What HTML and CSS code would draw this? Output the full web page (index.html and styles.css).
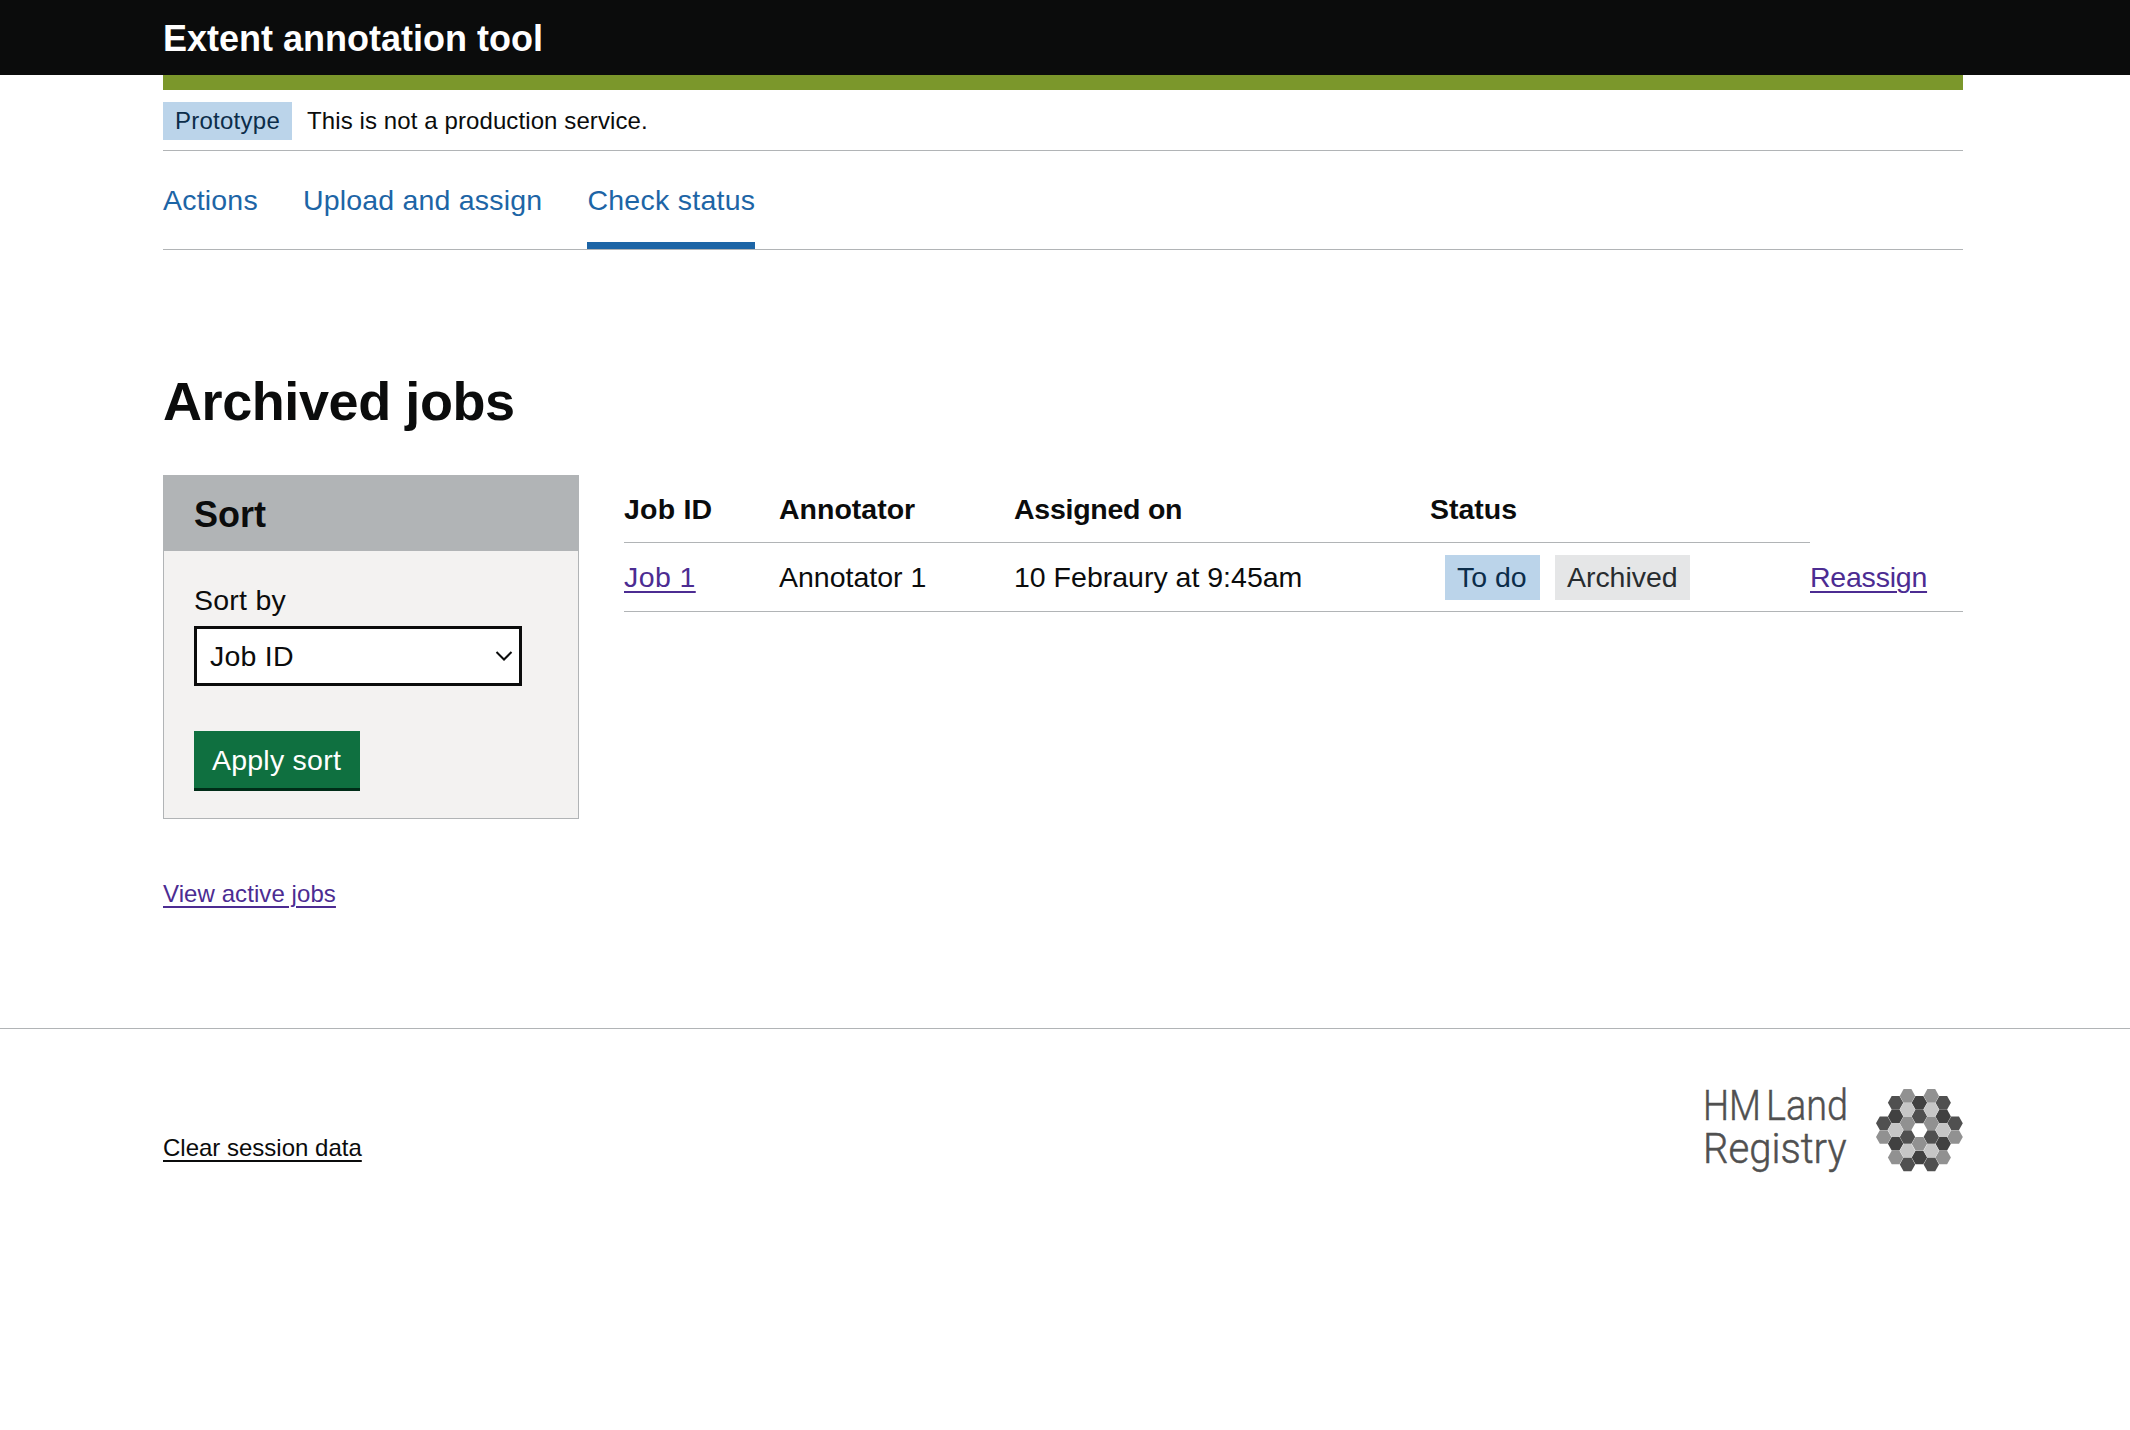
FILE: index.html
```html
<!DOCTYPE html>
<html lang="en">
<head>
<meta charset="utf-8">
<title>Archived jobs - Extent annotation tool</title>
<link rel="stylesheet" href="styles.css">
</head>
<body>
<header class="header"><div class="container"><span class="header-title">Extent annotation tool</span></div></header>
<div class="container">
  <div class="brand-bar"></div>
  <div class="phase-banner"><strong class="tag tag-phase">Prototype</strong><span class="phase-text">This is not a production service.</span></div>
  <nav class="nav">
    <a class="nav-link" href="#">Actions</a>
    <a class="nav-link" href="#">Upload and assign</a>
    <a class="nav-link current" href="#">Check status</a>
  </nav>
  <main>
    <h1 class="heading">Archived jobs</h1>
    <div class="columns">
      <form class="sort-panel">
        <h2 class="sort-title">Sort</h2>
        <div class="sort-body">
          <label class="label" for="sort">Sort by</label>
          <div class="select-wrap">
            <select class="select" id="sort"><option>Job ID</option></select>
            <svg class="chevron" viewBox="0 0 18 12" width="18" height="12"><path d="M1.500 2 9 9.500 16.500 2"/></svg>
          </div>
          <button class="button" type="button">Apply sort</button>
        </div>
      </form>
      <table class="jobs">
        <colgroup><col class="col-id"><col class="col-annotator"><col class="col-assigned"><col class="col-status"><col></colgroup>
        <thead><tr><th class="th-id">Job ID</th><th>Annotator</th><th class="th-assigned">Assigned on</th><th>Status</th></tr></thead>
        <tbody><tr>
          <td><a class="link link-job" href="#">Job 1</a></td>
          <td>Annotator 1</td>
          <td>10 Febraury at 9:45am</td>
          <td><div class="tags"><strong class="tag tag-blue">To do</strong><strong class="tag tag-grey">Archived</strong></div></td>
          <td><a class="link link-reassign" href="#">Reassign</a></td>
        </tr></tbody>
      </table>
    </div>
    <p class="view-active"><a class="link" href="#">View active jobs</a></p>
  </main>
</div>
<footer class="footer">
  <div class="container footer-inner">
    <a class="footer-link" href="#">Clear session data</a>
    <svg class="logo" viewBox="0 0 260 86" width="260" height="86" role="img" aria-label="HM Land Registry">
      <defs><path id="hex" d="M-7.700 0-3.900-6.800H3.900L7.700 0 3.900 6.800H-3.900Z"/></defs>
      <g class="logo-text">
        <text x="0" y="31" textLength="58" lengthAdjust="spacingAndGlyphs">HM</text>
        <text x="63" y="31" textLength="82" lengthAdjust="spacingAndGlyphs">Land</text>
        <text x="0" y="74" textLength="143.500" lengthAdjust="spacingAndGlyphs">Registry</text>
      </g>
      <g class="hex-a"><use href="#hex" x="180.700" y="34.300"/><use href="#hex" x="192.600" y="13.700"/><use href="#hex" x="204.500" y="48"/><use href="#hex" x="204.500" y="75.400"/><use href="#hex" x="216.400" y="27.400"/><use href="#hex" x="228.300" y="48"/><use href="#hex" x="228.300" y="75.400"/><use href="#hex" x="240.200" y="13.700"/><use href="#hex" x="252.100" y="34.300"/></g>
      <g class="hex-b"><use href="#hex" x="192.600" y="27.400"/><use href="#hex" x="192.600" y="54.800"/><use href="#hex" x="216.400" y="13.700"/><use href="#hex" x="216.400" y="68.500"/><use href="#hex" x="240.200" y="27.400"/><use href="#hex" x="240.200" y="54.800"/></g>
      <g class="hex-c"><use href="#hex" x="180.700" y="48"/><use href="#hex" x="192.600" y="68.500"/><use href="#hex" x="204.500" y="6.900"/><use href="#hex" x="204.500" y="34.300"/><use href="#hex" x="216.400" y="54.800"/><use href="#hex" x="228.300" y="6.900"/><use href="#hex" x="228.300" y="34.300"/><use href="#hex" x="240.200" y="68.500"/><use href="#hex" x="252.100" y="48"/></g>
      <g class="hex-d"><use href="#hex" x="192.600" y="41.100"/><use href="#hex" x="204.500" y="20.600"/><use href="#hex" x="204.500" y="61.700"/><use href="#hex" x="228.300" y="20.600"/><use href="#hex" x="228.300" y="61.700"/><use href="#hex" x="240.200" y="41.100"/></g>
    </svg>
  </div>
</footer>
</body>
</html>
```
FILE: styles.css
```css
* { box-sizing: border-box; }
body { margin: 0; background: #fff; color: #0b0c0c; font-family: "Liberation Sans", Arial, sans-serif; font-size: 28.5px; }
.container { width: 1800px; margin-left: 163px; }
.header { height: 75px; background: #0b0c0c; }
.header-title { display: block; color: #fff; font-size: 36px; font-weight: 700; line-height: 77px; }
.brand-bar { height: 15px; background: #7b972b; }
.phase-banner { display: flex; padding: 12px 0 10px; border-bottom: 1px solid #b1b4b6; font-size: 24px; line-height: 38px; letter-spacing: 0.1px; }
.tag { font-weight: 400; }
.tag-phase { width: 129px; padding-left: 12px; margin-right: 15px; letter-spacing: 0.25px; }
.tag-phase, .tag-blue { background: #bbd4ea; color: #0c2d4a; }
.nav { display: flex; gap: 45px; border-bottom: 1px solid #b1b4b6; line-height: 98px; letter-spacing: 0.2px; }
.nav-link { color: #1d65a6; text-decoration: none; white-space: nowrap; }
.current { box-shadow: inset 0 -7px #1d65a6; letter-spacing: 0.27px; }
.heading { margin: 121px 0 44px; font-size: 54px; line-height: 60px; letter-spacing: -0.42px; }
.columns { display: flex; align-items: flex-start; gap: 45px; }
.sort-panel { width: 416px; border: 1px solid #b1b4b6; border-top: 0; background: #f3f2f1; }
.sort-title { height: 76px; margin: 0 -1px; padding: 3px 31px 0; background: #b1b4b6; font-size: 36px; line-height: 73px; }
.sort-body { padding: 34px 30px 30px; letter-spacing: 0.25px; }
.label { display: block; margin-bottom: 11px; line-height: 30px; }
.select-wrap { position: relative; width: 328px; height: 60px; margin-bottom: 45px; }
.select { appearance: none; width: 100%; height: 100%; padding: 0 13px; border: 3px solid #0b0c0c; border-radius: 0; background: #fff; color: #0b0c0c; font: inherit; letter-spacing: inherit; }
.chevron { position: absolute; right: 9px; top: 24px; fill: none; stroke: #0b0c0c; stroke-width: 2; }
.button { display: block; width: 166px; height: 57px; padding: 0 1px 0 0; border: 0; background: #0f7040; box-shadow: 0 3px #002d18; color: #fff; font: inherit; letter-spacing: inherit; line-height: 58px; white-space: nowrap; }
.jobs { width: 1339px; table-layout: fixed; border-collapse: separate; border-spacing: 0; line-height: 66px; }
.col-id { width: 155px; }
.col-annotator { width: 235px; }
.col-assigned { width: 416px; }
.col-status { width: 380px; }
.jobs th, .jobs td { height: 68px; padding: 1px 0 0; border-bottom: 1px solid #b1b4b6; text-align: left; vertical-align: top; white-space: nowrap; }
.jobs td { height: 69px; }
.jobs .th-id { letter-spacing: 0.2px; }
.jobs .th-assigned { letter-spacing: -0.25px; }
.tags { display: flex; gap: 15px; padding: 11px 0 0 15px; line-height: 45px; }
.tag-blue { width: 95px; padding-left: 12px; }
.tag-grey { width: 135px; padding-left: 12px; background: #e5e6e7; color: #282d30; letter-spacing: -0.05px; }
.link { color: #4c2c92; text-decoration-thickness: 2px; text-underline-offset: 4px; }
.link-job { letter-spacing: 0.4px; }
.link-reassign { letter-spacing: -0.22px; }
.view-active { margin: 57px 0 0; font-size: 24px; line-height: 36px; letter-spacing: 0.08px; }
.footer { margin-top: 116px; padding-top: 60px; border-top: 1px solid #b1b4b6; }
.footer-inner { display: flex; justify-content: space-between; align-items: flex-start; }
.footer-link { margin-top: 41px; color: #0b0c0c; font-size: 24px; line-height: 36px; text-decoration-thickness: 2px; text-underline-offset: 4px; }
.logo { display: block; overflow: visible; }
.logo-text { fill: #505050; stroke: #505050; stroke-width: 0.5; font-family: Roboto, "Open Sans", sans-serif; font-size: 43px; font-weight: 300; }
.hex-a { fill: #505050; }
.hex-b { fill: #414141; }
.hex-c { fill: #919191; }
.hex-d { fill: #c6c6c6; }
```
